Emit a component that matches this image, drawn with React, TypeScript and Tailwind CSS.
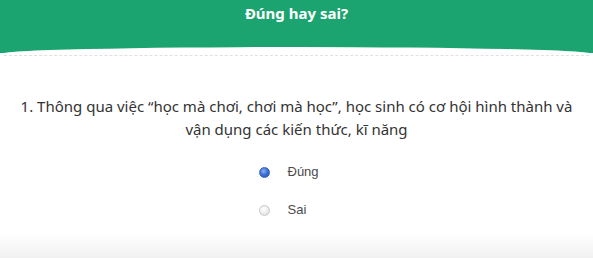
import { useState } from "react";

const options = ["Đúng", "Sai"];

function Radio({ checked }: { checked: boolean }) {
  return checked ? (
    <span className="block h-[11px] w-[11px] rounded-full border border-[#3a64b8] bg-[radial-gradient(circle_at_40%_35%,#8fb4f0_0%,#3d72d6_45%,#2350a8_100%)]" />
  ) : (
    <span className="block h-[11px] w-[11px] rounded-full border border-[#c9c9c9] bg-[radial-gradient(circle_at_40%_35%,#ffffff_0%,#eeeeee_50%,#d6d6d6_100%)]" />
  );
}

export default function App() {
  const [answer, setAnswer] = useState(0);

  return (
    <main className="flex h-[258px] w-full flex-col overflow-hidden bg-white font-['Noto_Sans','Lato',sans-serif]">
      <div className="h-[53px] shrink-0 bg-[#1ba46f] pt-[3px] text-center">
        <h1 className="text-[15px] font-bold leading-[20px] text-white">Đúng hay sai?</h1>
      </div>

      <section className="-mt-[6px] flex flex-1 flex-col rounded-tl-[50%_7px] rounded-tr-[50%_7px] bg-[linear-gradient(to_bottom,#ffffff_0%,#ffffff_88%,#f1f1f1_100%)] pt-[8px]">
        <div className="mx-[4px] border-t border-dashed border-[#e0e0e0]" />

        <p className="mt-[39px] px-3 text-center text-[15px] leading-[23px] text-[#333333]">
          1. Thông qua việc “học mà chơi, chơi mà học”, học sinh có cơ hội hình thành và vận dụng các kiến
          thức, kĩ năng
        </p>

        <ul className="mt-[21px] flex flex-col items-center gap-[18px] font-['Liberation_Sans',Arial,sans-serif]">
          {options.map((o, i) => (
            <li key={o}>
              <button
                type="button"
                onClick={() => setAnswer(i)}
                className="flex w-[76px] items-center gap-[18px] text-[13px] leading-[20px] text-[#4a4a4a]"
              >
                <Radio checked={answer === i} />
                {o}
              </button>
            </li>
          ))}
        </ul>
      </section>
    </main>
  );
}
